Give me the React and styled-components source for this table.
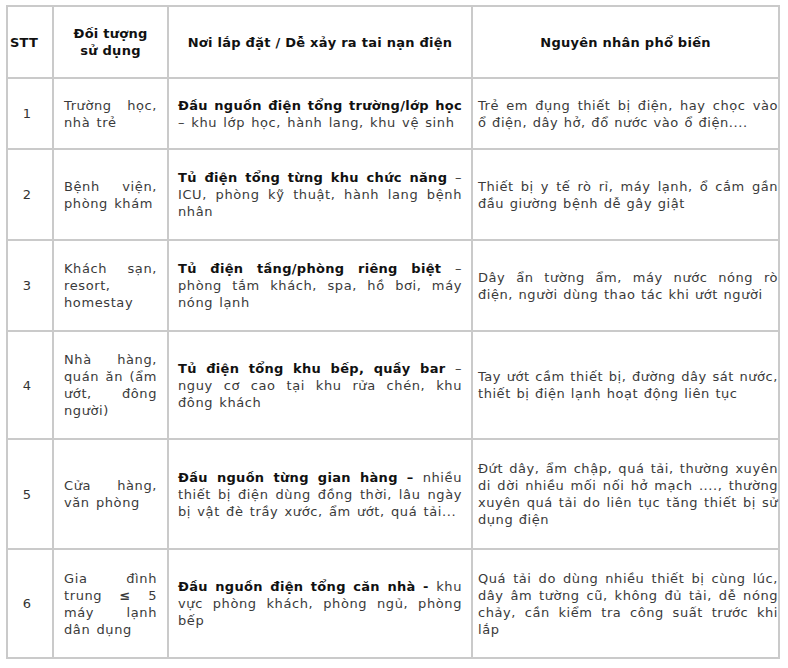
import React from "react";
import styled, { createGlobalStyle } from "styled-components";

const GlobalStyle = createGlobalStyle`
  html, body {
    margin: 0;
    padding: 0;
    background: #fff;
  }
  body {
    font-family: "DejaVu Sans", "Noto Sans", sans-serif;
  }
`;

const rows = [
  {
    id: 1,
    height: 71,
    who: "Trường học, nhà trẻ",
    where: ["Đầu nguồn điện tổng trường/lớp học", " – khu lớp học, hành lang, khu vệ sinh"],
    cause: "Trẻ em đụng thiết bị điện, hay chọc vào ổ điện, dây hở, đổ nước vào ổ điện....",
  },
  {
    id: 2,
    height: 91,
    who: "Bệnh viện, phòng khám",
    where: ["Tủ điện tổng từng khu chức năng", " – ICU, phòng kỹ thuật, hành lang bệnh nhân"],
    cause: "Thiết bị y tế rò rỉ, máy lạnh, ổ cắm gần đầu giường bệnh dễ gây giật",
  },
  {
    id: 3,
    height: 91,
    who: "Khách sạn, resort, homestay",
    where: ["Tủ điện tầng/phòng riêng biệt", " – phòng tắm khách, spa, hồ bơi, máy nóng lạnh"],
    cause: "Dây ẩn tường ẩm, máy nước nóng rò điện, người dùng thao tác khi ướt người",
  },
  {
    id: 4,
    height: 108,
    who: "Nhà hàng, quán ăn (ẩm ướt, đông người)",
    where: ["Tủ điện tổng khu bếp, quầy bar", " – nguy cơ cao tại khu rửa chén, khu đông khách"],
    cause: "Tay ướt cầm thiết bị, đường dây sát nước, thiết bị điện lạnh hoạt động liên tục",
  },
  {
    id: 5,
    height: 110,
    who: "Cửa hàng, văn phòng",
    where: ["Đầu nguồn từng gian hàng –", " nhiều thiết bị điện dùng đồng thời, lâu ngày bị vật đè trầy xước, ẩm ướt, quá tải..."],
    cause:
      "Đứt dây, ẩm chập, quá tải, thường xuyên di dời nhiều mối nối hở mạch ...., thường xuyên quá tải do liên tục tăng thiết bị sử dụng điện",
  },
  {
    id: 6,
    height: 109,
    who: (
      <>
        Gia đình trung <b>≤</b> 5 máy lạnh dân dụng
      </>
    ),
    where: ["Đầu nguồn điện tổng căn nhà -", " khu vực phòng khách, phòng ngủ, phòng bếp"],
    cause:
      "Quá tải do dùng nhiều thiết bị cùng lúc, dây âm tường cũ, không đủ tải, dễ nóng chảy, cần kiểm tra công suất trước khi lắp",
  },
];

function App() {
  return (
    <>
      <GlobalStyle />
      <Page>
        <Table>
          <colgroup>
            <col style={{ width: 46 }} />
            <col style={{ width: 115 }} />
            <col style={{ width: 304 }} />
            <col style={{ width: 307 }} />
          </colgroup>
          <thead>
            <Row height={72}>
              <HeadCell align="left" pad="0 0 0 2px">STT</HeadCell>
              <HeadCell>
                Đối tượng
                <br />
                sử dụng
              </HeadCell>
              <HeadCell>Nơi lắp đặt / Dễ xảy ra tai nạn điện</HeadCell>
              <HeadCell>Nguyên nhân phổ biến</HeadCell>
            </Row>
          </thead>
          <tbody>
            {rows.map((item) => (
              <Row key={item.id} height={item.height}>
                <NumCell>{item.id}</NumCell>
                <TextCell pad="0 10px">{item.who}</TextCell>
                <TextCell pad="0 9px">
                  <Strong>{item.where[0]}</Strong>
                  {item.where[1]}
                </TextCell>
                <CauseCell>{item.cause}</CauseCell>
              </Row>
            ))}
          </tbody>
        </Table>
      </Page>
    </>
  );
}

export default App;

const Page = styled.div`
  padding: 5px 0 0 6px;
`;

const Table = styled.table`
  width: 773px;
  border-collapse: collapse;
  table-layout: fixed;
  font-size: 13px;
  line-height: 17px;
`;

const Row = styled.tr`
  height: ${(p) => p.height}px;
`;

const Cell = styled.td`
  border: 2px solid #cacaca;
  vertical-align: middle;
  box-sizing: border-box;
`;

const HeadCell = styled(Cell).attrs({ as: "th" })`
  font-weight: bold;
  color: #111;
  letter-spacing: 0.25px;
  text-align: ${(p) => p.align || "center"};
  padding: ${(p) => p.pad || "0 8px"};
`;

const NumCell = styled(Cell)`
  text-align: center;
  padding: 0 6px 0 0;
  color: #333;
`;

const TextCell = styled(Cell)`
  text-align: justify;
  color: #3a3a3a;
  letter-spacing: 0.6px;
  word-spacing: 1.5px;
  padding: ${(p) => p.pad};
`;

const CauseCell = styled(TextCell)`
  letter-spacing: 0.55px;
  word-spacing: 0.9px;
  padding: 0 0 0 5px;
`;

const Strong = styled.b`
  color: #111;
  font-weight: bold;
  letter-spacing: 0.3px;
  word-spacing: 1.5px;
`;
